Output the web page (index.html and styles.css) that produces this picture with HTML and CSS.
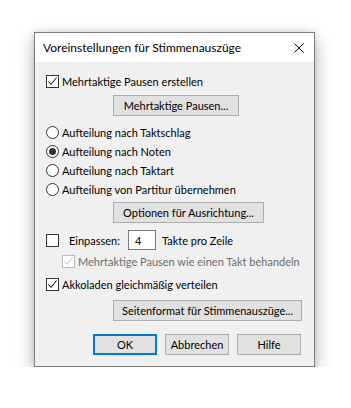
FILE: index.html
```html
<!DOCTYPE html>
<html lang="de">
<head>
<meta charset="utf-8">
<link rel="stylesheet" href="styles.css">
</head>
<body>
<div class="desk">
  <div class="dialog">
    <div class="titlebar">
      <span class="title">Voreinstellungen für Stimmenauszüge</span>
      <svg class="close" width="10" height="10" viewBox="0 0 10 10"><path d="M0.5 0.5 L9.5 9.5 M9.5 0.5 L0.5 9.5" stroke="#000" stroke-width="1" fill="none"/></svg>
    </div>
    <div class="content">
      <div class="row">
        <span class="cb"><svg width="11" height="11" viewBox="0 0 11 11"><path d="M1.5 5.5 L4 8.5 L9.5 1.5" stroke="#000" stroke-width="1" fill="none"/></svg></span>
        <span class="lbl">Mehrtaktige Pausen erstellen</span>
      </div>
      <div class="btnline m4"><span class="btn w126">Mehrtaktige Pausen...</span></div>
      <div class="row m7"><span class="rb"></span><span class="lbl">Aufteilung nach Taktschlag</span></div>
      <div class="row"><span class="rb"><span class="dot"></span></span><span class="lbl">Aufteilung nach Noten</span></div>
      <div class="row"><span class="rb"></span><span class="lbl">Aufteilung nach Taktart</span></div>
      <div class="row"><span class="rb"></span><span class="lbl">Aufteilung von Partitur übernehmen</span></div>
      <div class="btnline m3"><span class="btn w151">Optionen für Ausrichtung...</span></div>
      <div class="fitrow m7">
        <span class="cb"></span>
        <span class="fitlabel">Einpassen:</span>
        <span class="input">4</span>
        <span class="after">Takte pro Zeile</span>
      </div>
      <div class="row m2 indent disabled">
        <span class="cb dis"><svg width="11" height="11" viewBox="0 0 11 11"><path d="M1.5 5.5 L4 8.5 L9.5 1.5" stroke="#bcbcbc" stroke-width="1" fill="none"/></svg></span>
        <span class="lbl">Mehrtaktige Pausen wie einen Takt behandeln</span>
      </div>
      <div class="row m4">
        <span class="cb"><svg width="11" height="11" viewBox="0 0 11 11"><path d="M1.5 5.5 L4 8.5 L9.5 1.5" stroke="#000" stroke-width="1" fill="none"/></svg></span>
        <span class="lbl">Akkoladen gleichmäßig verteilen</span>
      </div>
      <div class="btnline m6"><span class="btn w189">Seitenformat für Stimmenauszüge...</span></div>
      <div class="actions">
        <span class="btn act default">OK</span>
        <span class="btn act">Abbrechen</span>
        <span class="btn act">Hilfe</span>
      </div>
    </div>
  </div>
</div>
</body>
</html>
```
FILE: styles.css
```css
html, body {
  margin: 0;
  padding: 0;
  background: #ffffff;
}
.desk {
  padding: 32px 0 0 34px;
}
.dialog {
  width: 279px;
  border: 1px solid #7a7a7a;
  background: #f0f0f0;
  box-shadow: 0 7px 18px rgba(0, 0, 0, 0.28), 0 0 6px rgba(0, 0, 0, 0.12);
  font-family: Lato, "Liberation Sans", sans-serif;
  font-size: 11px;
  color: #000;
}
.titlebar {
  height: 29px;
  background: #ffffff;
  display: flex;
  align-items: center;
  justify-content: space-between;
  padding: 0 10px 0 8px;
  font-size: 12px;
}
.title {
  white-space: nowrap;
}
.close {
  display: block;
}
.content {
  padding: 10px 0 11px 11px;
}
.row {
  height: 19px;
  display: flex;
  align-items: center;
  white-space: nowrap;
}
.m2 { margin-top: 2px; }
.m3 { margin-top: 3px; }
.m4 { margin-top: 4px; }
.m6 { margin-top: 6px; }
.m7 { margin-top: 7px; }
.cb {
  width: 13px;
  height: 13px;
  box-sizing: border-box;
  border: 1px solid #333333;
  background: #ffffff;
  display: flex;
  align-items: center;
  justify-content: center;
  flex: none;
}
.cb svg { display: block; }
.cb.dis {
  border-color: #bcbcbc;
}
.rb {
  width: 13px;
  height: 13px;
  box-sizing: border-box;
  border: 1px solid #333333;
  border-radius: 50%;
  background: #ffffff;
  display: flex;
  align-items: center;
  justify-content: center;
  flex: none;
}
.dot {
  width: 7px;
  height: 7px;
  border-radius: 50%;
  background: #333333;
}
.lbl {
  margin-left: 3px;
}
.btnline {
  display: flex;
  padding-left: 67px;
}
.btn {
  height: 21px;
  box-sizing: border-box;
  border: 1px solid #adadad;
  background: #e1e1e1;
  display: flex;
  align-items: center;
  justify-content: center;
  white-space: nowrap;
}
.w126 { width: 126px; }
.w151 { width: 151px; }
.w189 { width: 189px; }
.fitrow {
  height: 20px;
  display: flex;
  align-items: center;
  white-space: nowrap;
}
.fitlabel {
  width: 59px;
  margin-left: 10px;
}
.input {
  width: 28px;
  height: 20px;
  box-sizing: border-box;
  border: 1px solid #7a7a7a;
  background: #ffffff;
  padding-left: 6px;
  display: flex;
  align-items: center;
}
.after {
  margin-left: 6px;
}
.indent {
  padding-left: 16px;
}
.disabled .lbl {
  color: #6d6d6d;
}
.actions {
  margin-top: 13px;
  padding-left: 47px;
  display: flex;
  gap: 8px;
}
.act {
  width: 64px;
}
.default {
  border: 2px solid #0078d7;
}
```
